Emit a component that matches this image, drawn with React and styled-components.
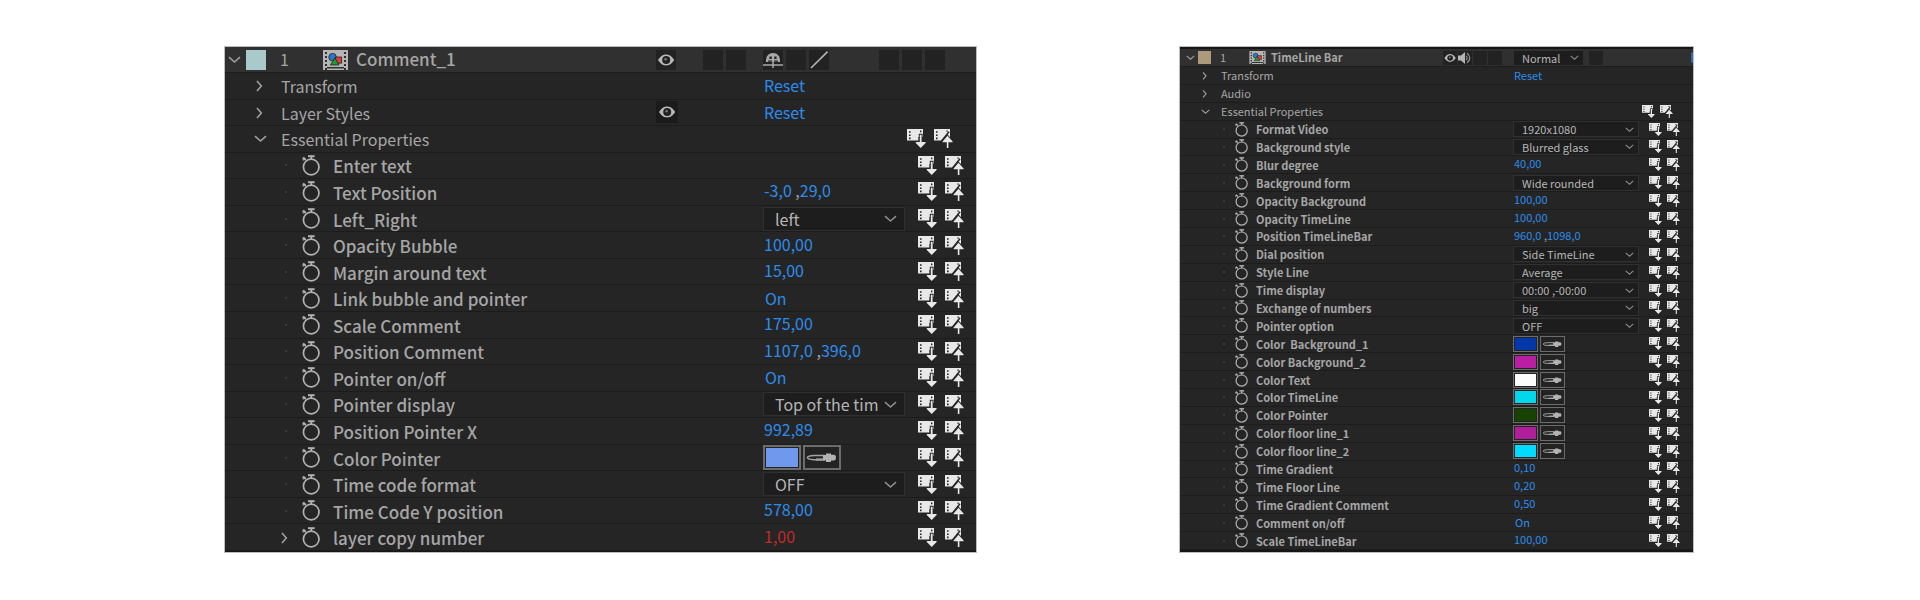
import React from "react";
import styled, { createGlobalStyle, css, ThemeProvider } from "styled-components";

const GlobalStyle = createGlobalStyle`
  *, *::before, *::after { box-sizing: border-box; }
  body { margin: 0; background: #fff; }
  button, select, input { font: inherit; color: inherit; margin: 0; }
`;

const large = {
  font: 16, labelFont: 17, labelWeight: 500,
  padTop: 0, padBottom: 1, header: 25,
  label: 431, switches: 107,
  chevron: 13, headPad: 3, headGap: 5, tag: 20, numberGap: 14, numberW: 43, headIcon: 25, titleGap: 8,
  groupPad: 29, groupGap: 14, numberLift: 2, titleLift: 2,
  propPad: 54, propGap: 10, watchW: 18, watchH: 21, watchGap: 13,
  box: 20, boxGap: 3, switchGap: 27, eyeBox: 22, flagGap: 50,
  hotPad: 1, hotLift: 3, wordLift: 1, selectW: 142, selectH: 24, selectLine: 24, selectPad: 12, selectRight: 27, selectArrow: 8,
  swatchW: 38, swatchH: 25, swatchPad: 1, swatchBorder: 2, swatchGap: 2,
  action: 19, actionGap: 8, actionPad: 12, groupActionPad: 23, labelDrop: 1,
};
const small = {
  font: 11, labelFont: 11, labelWeight: 700,
  padTop: 2, padBottom: 2, header: 17,
  label: 263, switches: 70,
  chevron: 9, headPad: 6, headGap: 3, tag: 13, numberGap: 9, numberW: 29, headIcon: 17, titleGap: 5,
  groupPad: 21, groupGap: 11, numberLift: 1, titleLift: 0,
  propPad: 39, propGap: 7, watchW: 13, watchH: 15, watchGap: 8,
  box: 14, boxGap: 1, switchGap: 1, eyeBox: 14, flagGap: 5,
  hotPad: 1, hotLift: 2, wordLift: 0, selectW: 126, selectH: 16, selectLine: 16, selectPad: 9, selectRight: 20, selectArrow: 5,
  swatchW: 25, swatchH: 16, swatchPad: 1, swatchBorder: 1, swatchGap: 2,
  action: 13, actionGap: 5, actionPad: 13, groupActionPad: 20, labelDrop: 1,
};
const px = (key) => ({ theme }) => `${theme[key]}px`;

const Page = styled.main`
  display: grid;
  grid-template-columns: 751fr 513fr;
  column-gap: 204px;
  min-height: 100vh;
  padding: 47px 227px 48px 225px;
  background: #fff;
  font-family: "Noto Sans CJK SC", "Noto Sans", sans-serif;
  color: #a6a6a6;
`;
const Panel = styled.section`
  display: flex;
  flex-direction: column;
  min-width: 0;
  padding: ${px("padTop")} 0 ${px("padBottom")};
  background: #161616;
  outline: 1px solid #bdbdbd;
  font-size: ${px("font")};
  line-height: 1;
`;
const rowGrid = css`
  display: grid;
  grid-template-columns: ${px("label")} ${px("switches")} minmax(0, 1fr) auto;
  align-items: center;
  border-bottom: 1px solid #1c1c1c;
`;
const Header = styled.header`
  ${rowGrid}
  flex: none;
  box-sizing: content-box;
  height: ${px("header")};
  background: #303030;
`;
const Rows = styled.ul`
  flex: 1;
  display: grid;
  grid-auto-rows: minmax(${px("selectH")}, 1fr);
  margin: 0;
  padding: 0;
  list-style: none;
`;
const Row = styled.li`
  ${rowGrid}
  background: #252525;
`;
const plain = css`
  appearance: none;
  border: 0;
  padding: 0;
  background: none;
  display: inline-flex;
  align-items: center;
  justify-content: center;
  flex: none;
  cursor: pointer;
`;
const IconButton = styled.button`
  ${plain}
`;
const HeaderLead = styled.div`
  display: flex;
  align-items: center;
  padding-left: ${px("headPad")};
`;
const Tag = styled.button`
  ${plain}
  width: ${px("tag")};
  height: ${px("tag")};
  margin-left: ${px("headGap")};
  background: ${({ $color }) => $color};
`;
const LayerNumber = styled.span`
  width: ${px("numberW")};
  margin-left: ${px("numberGap")};
  padding-bottom: ${px("numberLift")};
  font-size: ${px("font")};
`;
const Title = styled.h2`
  margin: 0 0 0 ${px("titleGap")};
  padding-bottom: ${px("titleLift")};
  font-size: ${px("labelFont")};
  font-weight: ${({ theme }) => theme.labelWeight};
  white-space: nowrap;
`;
const Switches = styled.div`
  display: flex;
  align-items: center;
  gap: ${px("boxGap")};
`;
const Box = styled.button`
  ${plain}
  width: ${px("box")};
  height: ${px("box")};
  background: #222;
  margin-left: ${({ $after, theme }) => ($after ? theme[$after] - theme.boxGap : 0)}px;
`;
const EyeBox = styled(Box)`
  width: ${px("eyeBox")};
  height: ${px("eyeBox")};
  background: #1b1b1b;
`;
const GroupLead = styled.div`
  display: flex;
  align-items: center;
  gap: ${px("groupGap")};
  padding-left: ${px("groupPad")};
`;
const GroupName = styled.span`
  padding-top: ${px("labelDrop")};
  white-space: nowrap;
`;
const PropLead = styled.div`
  display: flex;
  align-items: center;
  padding-left: ${px("propPad")};
`;
const Dot = styled.span`
  width: ${px("chevron")};
  display: flex;
  justify-content: center;
  &::before {
    content: "";
    width: 2px;
    height: 2px;
    background: #3a3a3a;
  }
`;
const Watch = styled(IconButton)`
  margin: 0 ${px("watchGap")} 0 ${px("propGap")};
`;
const PropName = styled.label`
  padding-top: ${px("labelDrop")};
  font-size: ${px("labelFont")};
  font-weight: ${({ theme }) => theme.labelWeight};
  white-space: pre;
`;
const Value = styled.div`
  grid-column: 3;
  display: flex;
  align-items: center;
`;
const HotText = styled.button`
  ${plain}
  color: ${({ $red }) => ($red ? "#c22a2a" : "#2d8ceb")};
  padding-left: ${({ $word, theme }) => theme.hotPad + ($word ? 1 : 0)}px;
  padding-bottom: ${({ $number, theme }) => ($number ? theme.hotLift : theme.wordLift)}px;
  white-space: pre;
`;
const Comma = styled.span`
  color: #a3a3a3;
`;
const SelectWrap = styled.span`
  display: grid;
  align-items: center;
  width: ${({ $width, theme }) => $width || theme.selectW}px;
  > * { grid-area: 1 / 1; }
  > svg {
    justify-self: end;
    margin-right: ${px("selectArrow")};
    pointer-events: none;
    opacity: 0.85;
  }
`;
const Select = styled.select`
  appearance: none;
  width: 100%;
  height: ${px("selectH")};
  padding: 0 ${px("selectRight")} 0 ${px("selectPad")};
  border: 0;
  border-radius: 0;
  box-shadow: inset 0 0 0 1px #303030;
  background: #1d1d1d;
  color: #b6b6b6;
  line-height: ${px("selectLine")};
  text-overflow: clip;
`;
const Swatch = styled.input`
  appearance: none;
  width: ${px("swatchW")};
  height: ${px("swatchH")};
  padding: ${px("swatchPad")};
  border: ${px("swatchBorder")} solid #6c6c6c;
  background: #232323;
  &::-webkit-color-swatch-wrapper { padding: 0; }
  &::-webkit-color-swatch { border: 0; border-radius: 0; }
`;
const Dropper = styled.button`
  ${plain}
  width: ${px("swatchW")};
  height: ${px("swatchH")};
  margin-left: ${px("swatchGap")};
  border: ${px("swatchBorder")} solid #6c6c6c;
  background: #232323;
`;
const Actions = styled.div`
  grid-column: 4;
  display: flex;
  gap: ${px("actionGap")};
  padding-right: ${({ $group, theme }) => ($group ? theme.groupActionPad : theme.actionPad)}px;
`;
const ParentKnob = styled.span`
  grid-column: 4;
  width: 2px;
  height: 11px;
  border-radius: 4px 0 0 4px;
  background: #2d6db5;
`;
/* Drawings take their size from the panel's density. */
const Drawing = styled.svg`
  display: block;
  flex: none;
  width: ${({ $w, theme }) => theme[$w] || $w}px;
  height: ${({ $h, theme }) => theme[$h] || $h}px;
`;

const Chevron = ({ open }) => (
  <Drawing $w="chevron" $h="chevron" viewBox="0 0 13 13" fill="none" stroke="#a0a0a0" strokeWidth="1.6">
    <path d={open ? "M1 4.2 L6.5 9 L12 4.2" : "M3 1.9 L7.3 7 L3 12.1"} />
  </Drawing>
);
const Stopwatch = () => (
  <Drawing $w="watchW" $h="watchH" viewBox="0 0 18 21" fill="none" stroke="#b2b2b2" strokeWidth="1.7">
    <circle cx="9.2" cy="12" r="7.8" />
    <path strokeWidth="2" d="M6 1.2 H12.6" />
    <path d="M9.3 1.2 V4.6" />
    <path strokeWidth="2" d="M1.2 2.6 L3.8 5" />
    <path strokeWidth="1.2" d="M1.2 2.4 V5.4" />
  </Drawing>
);
const CompIcon = () => (
  <Drawing $w="headIcon" $h="tag" viewBox="0 0 25 20">
    <path fill="#b5b5b5" d="M0 0H25V20H0Z" />
    <path fill="#303030" d="M2 2h2v2H2zM2 6h2v2H2zM2 10h2v2H2zM2 14h2v2H2zM21 2h2v2h-2zM21 6h2v2h-2zM21 10h2v2h-2zM21 14h2v2h-2zM2 18h2v2H2zM21 18h2v2h-2zM4 17h17v1.4H4z" />
    <circle cx="9.6" cy="7.2" r="3.8" fill="#2777cf" stroke="#222" strokeWidth=".8" />
    <path fill="#e23a3a" stroke="#222" strokeWidth=".8" d="M12.6 7H18.6V13.2H12.6Z" />
    <path fill="#1d9a35" stroke="#222" strokeWidth=".8" d="M11.8 7.8L16 15H7.4Z" />
  </Drawing>
);
const Eye = () => (
  <Drawing $w="box" $h="box" viewBox="0 0 20 20">
    <path fill="#b8b8b8" d="M2 10C5 5.2 7.6 4.4 10 4.4S15.4 5.2 18.2 10C15.4 14.6 12.4 15.4 10 15.4S5 14.6 2 10Z" />
    <circle cx="10.2" cy="9.9" r="4" fill="#222" />
    <circle cx="9.6" cy="9.2" r="1.3" fill="#777" />
  </Drawing>
);
const Speaker = () => (
  <Drawing $w={14} $h={14} viewBox="0 0 14 14">
    <path fill="#b4b4b4" d="M0 4.5H3L7 1V13L3 9.5H0Z" />
    <path fill="none" stroke="#a0a0a0" strokeWidth="1.1" d="M8.4 4.8Q10 7 8.4 9.2M9 2.2Q14.6 7 9 11.8" />
  </Drawing>
);
const Shy = () => (
  <Drawing $w={20} $h={20} viewBox="0 0 20 20">
    <path fill="#a8a8a8" d="M3 11C3 6 5.6 3 10 3S17 6 17 11V12H3Z" />
    <path stroke="#a8a8a8" strokeWidth="1.5" d="M0 15H20M10 10V18" />
    <path fill="#252525" d="M6.4 6.6h2.4v2.4H6.4zM11.2 6.6h2.4v2.4h-2.4zM5 10.6h4v1.2H5zM11 10.6h4v1.2h-4z" />
  </Drawing>
);
const Slash = () => (
  <Drawing $w={20} $h={20} viewBox="0 0 20 20">
    <path stroke="#b4b4b4" strokeWidth="1.6" d="M2 18L18.6 1.6" />
  </Drawing>
);
const DropperIcon = () => (
  <Drawing $w="swatchW" $h="swatchH" viewBox="0 0 38 25">
    <path fill="none" stroke="#a4a4a4" strokeWidth="1.5" d="M22 10.4H11Q4.4 10.8 4.4 12.6T11 14.8H22" />
    <path fill="#a4a4a4" d="M13 13.4H22V15.6H13Z" />
    <path fill="#b4b4b4" d="M20 10H23V8.4H28V9.8H31Q33 10 33 12.6T31 15.4H28V17H23V15.2H20Z" />
  </Drawing>
);
const perforation = "M2 2.2h1.6v1.6H2zM2 5.4h1.6V7H2zM2 8.6h1.6v1.6H2z";
const Pull = () => (
  <Drawing $w="action" $h="action" viewBox="0 0 19 19">
    <path fill="#e8e8e8" d="M0 0H16V8H11.4V11.4H0Z" />
    <path fill="#252525" d={`${perforation}M13 1.6h1.4v1.6H13z`} />
    <path
      fill="#e8e8e8"
      stroke="#252525"
      strokeWidth="2"
      paintOrder="stroke"
      d="M12.8 5.8H14.6V13H18.6V14L13.7 18.9L8.8 14V13H12.8Z"
    />
  </Drawing>
);
const Push = () => (
  <Drawing $w="action" $h="action" viewBox="0 0 19 19">
    <path fill="#e8e8e8" d="M0 0H16V8.4H14L7.6 11.4H0Z" />
    <path fill="#252525" d={`${perforation}M12.4 1.6h1.4v1.2h-1.4z`} />
    <path stroke="#252525" strokeWidth="1.5" d="M7.4 12.2L15 2.8" />
    <path
      fill="#e8e8e8"
      stroke="#252525"
      strokeWidth="2"
      paintOrder="stroke"
      d="M13.5 6.8L18.6 12.4V13.2H14.4V19H12.8V13.2H8.6V12.4Z"
    />
  </Drawing>
);

const RowActions = ({ group }) => (
  <Actions $group={group}>
    <IconButton aria-label="Pull master value"><Pull /></IconButton>
    <IconButton aria-label="Push to master"><Push /></IconButton>
  </Actions>
);
const Dropdown = ({ id, value, width, label }) => (
  <SelectWrap $width={width}>
    <Select id={id} aria-label={label} defaultValue={value}>
      <option>{value}</option>
    </Select>
    <Chevron open />
  </SelectWrap>
);

function Control({ id, kind, value }) {
  if (kind === "select") return <Dropdown id={id} value={value} />;
  if (kind === "color")
    return (
      <>
        <Swatch id={id} type="color" defaultValue={value} />
        <Dropper aria-label="Pick color"><DropperIcon /></Dropper>
      </>
    );
  if (kind === "toggle") return <HotText id={id} $word>{value}</HotText>;
  if (kind === "point")
    return (
      <HotText id={id} $number>
        {value[0]} <Comma>,</Comma>{value[1]}
      </HotText>
    );
  if (kind === "number" || kind === "driven")
    return <HotText id={id} $number $red={kind === "driven"}>{value}</HotText>;
  return null;
}

const Property = ({ id, name, kind, value }) => (
  <Row>
    <PropLead>
      {kind === "driven" ? <IconButton aria-label={`Expand ${name}`}><Chevron /></IconButton> : <Dot />}
      <Watch aria-label={`Animate ${name}`}><Stopwatch /></Watch>
      <PropName htmlFor={kind ? id : undefined}>{name}</PropName>
    </PropLead>
    <Value><Control id={id} kind={kind} value={value} /></Value>
    <RowActions />
  </Row>
);
const Group = ({ name, open, reset, eye, actions }) => (
  <Row>
    <GroupLead>
      <IconButton aria-label={`Toggle ${name}`}><Chevron open={open} /></IconButton>
      <GroupName>{name}</GroupName>
    </GroupLead>
    {eye && <Switches><EyeBox aria-label="Visible"><Eye /></EyeBox></Switches>}
    <Value>{reset && <HotText>Reset</HotText>}</Value>
    {actions && <RowActions group />}
  </Row>
);
const LayerLead = ({ color, title }) => (
  <HeaderLead>
    <IconButton aria-label="Collapse layer"><Chevron open /></IconButton>
    <Tag $color={color} aria-label="Layer color" />
    <LayerNumber>1</LayerNumber>
    <CompIcon />
    <Title>{title}</Title>
  </HeaderLead>
);

const commentProps = [
  ["Enter text"],
  ["Text Position", "point", ["-3,0", "29,0"]],
  ["Left_Right", "select", "left"],
  ["Opacity Bubble", "number", "100,00"],
  ["Margin around text", "number", "15,00"],
  ["Link bubble and pointer", "toggle", "On"],
  ["Scale Comment", "number", "175,00"],
  ["Position Comment", "point", ["1107,0", "396,0"]],
  ["Pointer on/off", "toggle", "On"],
  ["Pointer display", "select", "Top of the timeline"],
  ["Position Pointer X", "number", "992,89"],
  ["Color Pointer", "color", "#7099ee"],
  ["Time code format", "select", "OFF"],
  ["Time Code Y position", "number", "578,00"],
  ["layer copy number", "driven", "1,00"],
];
const timelineProps = [
  ["Format Video", "select", "1920x1080"],
  ["Background style", "select", "Blurred glass"],
  ["Blur degree", "number", "40,00"],
  ["Background form", "select", "Wide rounded"],
  ["Opacity Background", "number", "100,00"],
  ["Opacity TimeLine", "number", "100,00"],
  ["Position TimeLineBar", "point", ["960,0", "1098,0"]],
  ["Dial position", "select", "Side TimeLine"],
  ["Style Line", "select", "Average"],
  ["Time display", "select", "00:00 ,-00:00"],
  ["Exchange of numbers", "select", "big"],
  ["Pointer option", "select", "OFF"],
  ["Color  Background_1", "color", "#0038ac"],
  ["Color Background_2", "color", "#b91fa2"],
  ["Color Text", "color", "#fcfcfc"],
  ["Color TimeLine", "color", "#00d8ec"],
  ["Color Pointer", "color", "#174200"],
  ["Color floor line_1", "color", "#b01e9c"],
  ["Color floor line_2", "color", "#00dcff"],
  ["Time Gradient", "number", "0,10"],
  ["Time Floor Line", "number", "0,20"],
  ["Time Gradient Comment", "number", "0,50"],
  ["Comment on/off", "toggle", "On"],
  ["Scale TimeLineBar", "number", "100,00"],
];
const list = (prefix, props) =>
  props.map(([name, kind, value], i) => (
    <Property key={name} id={`${prefix}-${i}`} name={name} kind={kind} value={value} />
  ));

const CommentPanel = () => (
  <Panel>
    <Header>
      <LayerLead color="#a9cac8" title="Comment_1" />
      <Switches>
        <Box aria-label="Visible"><Eye /></Box>
        <Box $after="switchGap" aria-label="Solo" />
        <Box aria-label="Lock" />
      </Switches>
      <Switches>
        <Box aria-label="Shy"><Shy /></Box>
        <Box aria-label="Collapse transformations" />
        <Box aria-label="Quality"><Slash /></Box>
        <Box $after="flagGap" aria-label="Motion blur" />
        <Box aria-label="Adjustment layer" />
        <Box aria-label="3D layer" />
      </Switches>
    </Header>
    <Rows>
      <Group name="Transform" reset />
      <Group name="Layer Styles" reset eye />
      <Group name="Essential Properties" open actions />
      {list("comment", commentProps)}
    </Rows>
  </Panel>
);
const TimelinePanel = () => (
  <Panel>
    <Header>
      <LayerLead color="#ad9a7b" title="TimeLine Bar" />
      <Switches>
        <Box aria-label="Visible"><Eye /></Box>
        <Box aria-label="Audio"><Speaker /></Box>
        <Box aria-label="Solo" />
        <Box aria-label="Lock" />
      </Switches>
      <Switches>
        <Dropdown value="Normal" width={71} label="Blending mode" />
        <Box $after="flagGap" aria-label="Preserve transparency" />
      </Switches>
      <ParentKnob />
    </Header>
    <Rows>
      <Group name="Transform" reset />
      <Group name="Audio" />
      <Group name="Essential Properties" open actions />
      {list("timeline", timelineProps)}
    </Rows>
  </Panel>
);

export default function App() {
  return (
    <>
      <GlobalStyle />
      <Page>
        <ThemeProvider theme={large}><CommentPanel /></ThemeProvider>
        <ThemeProvider theme={small}><TimelinePanel /></ThemeProvider>
      </Page>
    </>
  );
}
